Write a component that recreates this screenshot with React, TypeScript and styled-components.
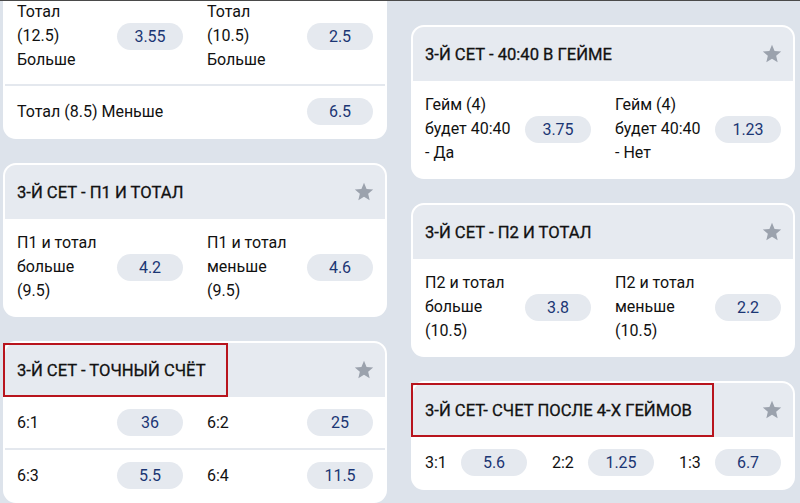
import { createGlobalStyle } from "styled-components";
import styled from "styled-components";
import { MdStar } from "react-icons/md";

interface Outcome {
    label: string,
    odd: string
}

interface Market {
    title?: string,
    marked?: boolean,
    rows: Outcome[][]
}

const GlobalStyle = createGlobalStyle`
    html, body {
        margin: 0;
        padding: 0;
        background: #dde3eb;
        font-family: Roboto, "Noto Sans", "Liberation Sans", sans-serif;
    }
    * {
        box-sizing: border-box;
    }
`

const Page = styled.div`
    width: 800px;
    height: 503px;
    overflow: hidden;
    border-top: 1px solid #4a4a4a;
    display: grid;
    grid-template-columns: 384px 384px;
    column-gap: 24px;
    align-items: start;
    padding-left: 3px;
`

const Column = styled.div<{ $offset: number }>`
    display: flex;
    flex-direction: column;
    gap: 24px;
    margin-top: ${({ $offset }) => $offset}px;
`

const Card = styled.section`
    background: #ffffff;
    border: 2px solid #ffffff;
    border-radius: 13px;
`

const CardHeader = styled.header`
    height: 54px;
    display: flex;
    align-items: center;
    justify-content: space-between;
    padding: 0 10px 0 12px;
    background: #e6eaf0;
    border-radius: 11px 11px 0 0;
`

const Title = styled.h3<{ $marked?: boolean }>`
    margin: 0 0 0 -14px;
    align-self: stretch;
    display: flex;
    align-items: center;
    padding: 1px 22px 0 14px;
    font-size: 16.6px;
    font-weight: 400;
    -webkit-text-stroke: 0.3px #121212;
    color: #121212;
    box-shadow: ${({ $marked }) => ($marked ? "inset 0 0 0 2px #b8141d" : "none")};
`

const Star = styled.span`
    display: flex;
    color: #9ba2ad;
`

const Row = styled.div<{ $cols: number }>`
    display: grid;
    grid-template-columns: repeat(${({ $cols }) => $cols}, 1fr);
    column-gap: ${({ $cols }) => ($cols > 2 ? 25 : 24)}px;
    padding: 12px;
    & + & {
        border-top: 2px solid #e4e8ee;
    }
`

const Option = styled.div`
    display: flex;
    align-items: center;
    justify-content: space-between;
    gap: 8px;
`

const Label = styled.span`
    font-size: 16px;
    line-height: 24px;
    color: #111111;
    white-space: pre-line;
`

const Odd = styled.button`
    flex: 0 0 66px;
    height: 27px;
    border: none;
    border-radius: 14px;
    background: #e5e9ef;
    color: #1b3674;
    font-family: inherit;
    font-size: 16px;
    padding: 0;
    cursor: pointer;
`

const leftMarkets: Market[] = [
    {
        rows: [
            [
                { label: "Тотал\n(12.5)\nБольше", odd: "3.55" },
                { label: "Тотал\n(10.5)\nБольше", odd: "2.5" }
            ],
            [{ label: "Тотал (8.5) Меньше", odd: "6.5" }]
        ]
    },
    {
        title: "3-Й СЕТ - П1 И ТОТАЛ",
        rows: [[
            { label: "П1 и тотал\nбольше\n(9.5)", odd: "4.2" },
            { label: "П1 и тотал\nменьше\n(9.5)", odd: "4.6" }
        ]]
    },
    {
        title: "3-Й СЕТ - ТОЧНЫЙ СЧЁТ",
        marked: true,
        rows: [
            [{ label: "6:1", odd: "36" }, { label: "6:2", odd: "25" }],
            [{ label: "6:3", odd: "5.5" }, { label: "6:4", odd: "11.5" }]
        ]
    }
];

const rightMarkets: Market[] = [
    {
        title: "3-Й СЕТ - 40:40 В ГЕЙМЕ",
        rows: [[
            { label: "Гейм (4)\nбудет 40:40\n- Да", odd: "3.75" },
            { label: "Гейм (4)\nбудет 40:40\n- Нет", odd: "1.23" }
        ]]
    },
    {
        title: "3-Й СЕТ - П2 И ТОТАЛ",
        rows: [[
            { label: "П2 и тотал\nбольше\n(10.5)", odd: "3.8" },
            { label: "П2 и тотал\nменьше\n(10.5)", odd: "2.2" }
        ]]
    },
    {
        title: "3-Й СЕТ- СЧЕТ ПОСЛЕ 4-Х ГЕЙМОВ",
        marked: true,
        rows: [[
            { label: "3:1", odd: "5.6" },
            { label: "2:2", odd: "1.25" },
            { label: "1:3", odd: "6.7" }
        ]]
    }
];

const MarketCard = ({ title, marked, rows }: Market) => (
    <Card>
        {title && (
            <CardHeader>
                <Title $marked={marked}>{title}</Title>
                <Star><MdStar size={22} /></Star>
            </CardHeader>
        )}
        {rows.map((row, i) => (
            <Row key={i} $cols={row.length}>
                {row.map((o) => (
                    <Option key={o.label}>
                        <Label>{o.label}</Label>
                        <Odd>{o.odd}</Odd>
                    </Option>
                ))}
            </Row>
        ))}
    </Card>
);

const App = () => {
    return (
        <>
            <GlobalStyle />
            <Page>
                <Column $offset={-15}>
                    {leftMarkets.map((m, i) => <MarketCard key={i} {...m} />)}
                </Column>
                <Column $offset={24}>
                    {rightMarkets.map((m, i) => <MarketCard key={i} {...m} />)}
                </Column>
            </Page>
        </>
    );
};

export default App;
